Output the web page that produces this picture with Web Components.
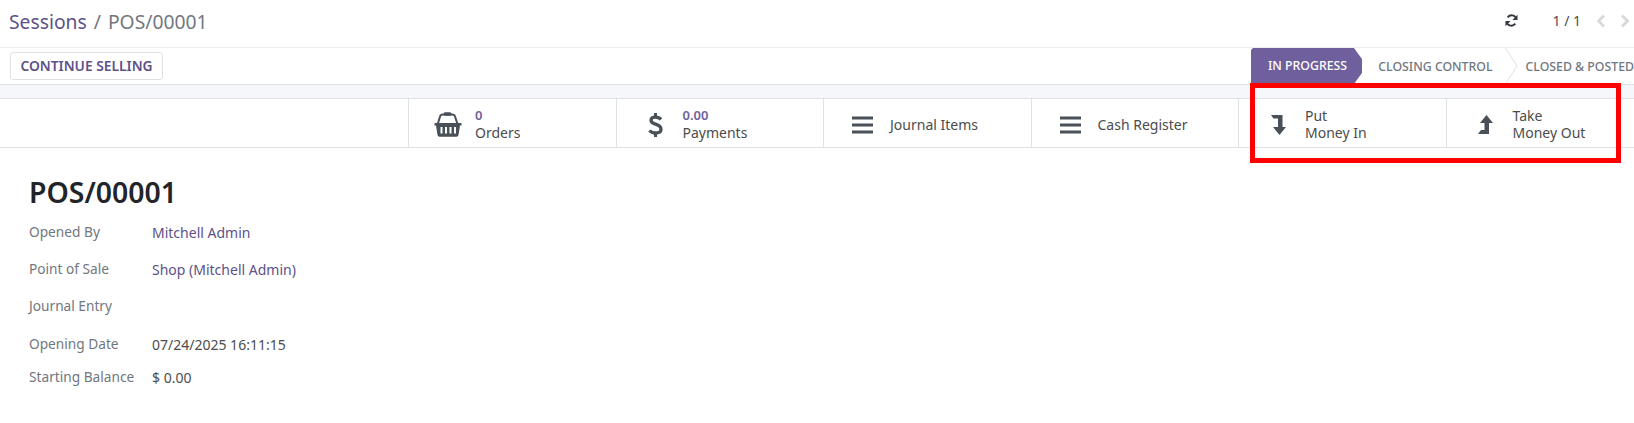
<!DOCTYPE html>
<html>
<head>
<meta charset="utf-8">
<style>
  html, body { margin: 0; padding: 0; background: #fff; overflow: hidden; }
  body { width: 1634px; height: 423px; font-family: "Noto Sans", sans-serif; font-size: 14px; color: #4c4c4c; position: relative; }
</style>
</head>
<body>
<control-panel></control-panel>
<action-bar>
  <status-steps></status-steps>
</action-bar>
<div style="height:13px;background:#f6f7fa;border-bottom:1px solid #dee2e6"></div>
<button-box>
  <stat-button icon="basket" value="0" label="Orders"></stat-button>
  <stat-button icon="dollar" value="0.00" label="Payments"></stat-button>
  <stat-button icon="bars" label="Journal Items"></stat-button>
  <stat-button icon="bars" label="Cash Register"></stat-button>
  <stat-button icon="down" line1="Put" label="Money In"></stat-button>
  <stat-button icon="up" line1="Take" label="Money Out"></stat-button>
</button-box>
<session-form>
  <field-row label="Opened By" link h="37">Mitchell Admin</field-row>
  <field-row label="Point of Sale" link h="37">Shop (Mitchell Admin)</field-row>
  <field-row label="Journal Entry" h="38"></field-row>
  <field-row label="Opening Date" h="33">07/24/2025 16:11:15</field-row>
  <field-row label="Starting Balance" h="31">$ 0.00</field-row>
</session-form>
<red-frame></red-frame>

<script>
const ICONS = {
  basket: '<svg width="28" height="25" viewBox="0 0 28 25"><path d="M3.800 12 L6 4.500 Q6.500 2.500 9 2.500 H18 Q20.500 2.500 21 4.500 L23.500 12" fill="none" stroke="#495057" stroke-width="2"/><rect x="9.500" y="0.300" width="8" height="3.500" rx="1.500" fill="#495057"/><path d="M0.500 11.500 Q0.500 11 1 11 H27 Q27.500 11 27.500 11.500 V13.500 H26 L24.500 23 Q24.200 24.800 22.500 24.800 H5.500 Q3.800 24.800 3.500 23 L2 13.500 H0.500 Z" fill="#495057"/><path d="M7.500 15 V21.500 M12 15 V21.500 M16.500 15 V21.500 M21 15 V21.500" stroke="#fff" stroke-width="2" fill="none"/></svg>',
  dollar: '<svg width="15" height="26" viewBox="0 0 15 26"><path d="M13 7.500 Q11 5.200 7.500 5.200 Q3 5.200 3 8.300 Q3 10.800 7.500 12.200 Q13 13.800 13 17.500 Q13 21 7.500 21 Q3.500 21 1.500 18.500" fill="none" stroke="#495057" stroke-width="3.300"/><path d="M6 1 H9 V5.500 H6 Z M6 20.500 H9 V25 H6 Z" fill="#495057"/></svg>',
  bars: '<svg width="21" height="18" viewBox="0 0 21 18" style="margin-left:-1px"><path d="M0 0.500 H21 V3.500 H0 Z M0 7.500 H21 V10.500 H0 Z M0 14.500 H21 V17.500 H0 Z" fill="#495057"/></svg>',
  down: '<svg width="15" height="20" viewBox="0 0 15 20" style="margin-top:1px"><path d="M0 0 H11.500 V12 H15 L8.500 20 L2 12 H7 V3.500 H2.500 Z" fill="#495057"/></svg>',
  up: '<svg width="15" height="19" viewBox="0 0 15 19" style="margin-top:-1px"><path d="M8.500 0 L15 8 H11 V19 H0 L3 15 H6.500 V8 H2 Z" fill="#495057"/></svg>'
};

class ControlPanel extends HTMLElement {
  constructor() {
    super();
    this.attachShadow({mode: 'open'}).innerHTML = `
      <style>
        :host { display: flex; height: 47px; border-bottom: 1px solid #eceef1; align-items: center; padding-left: 9px; }
        .crumb { font-size: 19.300px; color: #71777f; flex: 1; padding-bottom: 4px; }
        .crumb a { color: #5d5187; }
        .crumb span { margin: 0 2px; }
        .pager { display: flex; align-items: center; height: 100%; padding-bottom: 6px; box-sizing: border-box; }
        .num { font-size: 14px; color: #4c4c4c; margin: 0 15px 0 34px; }
        svg { display: block; }
      </style>
      <div class="crumb"><a>Sessions</a> <span>/</span> POS/00001</div>
      <div class="pager">
        <svg width="13" height="13" viewBox="0 0 13 13"><path d="M11.500 5 A5 5 0 0 0 2.700 3.300 M1.500 8 A5 5 0 0 0 10.300 9.700" fill="none" stroke="#343a40" stroke-width="1.900"/><path d="M12.500 0.800 V6 H7.500 Z M0.500 12.200 V7 H5.500 Z" fill="#343a40"/></svg>
        <div class="num">1 / 1</div>
        <svg width="10" height="14" viewBox="0 0 10 14"><path d="M8 1.500 L2.500 7 L8 12.500" fill="none" stroke="#d7d9dc" stroke-width="2.800"/></svg>
        <svg style="margin:0 4px 0 14px" width="10" height="14" viewBox="0 0 10 14"><path d="M2 1.500 L7.500 7 L2 12.500" fill="none" stroke="#d7d9dc" stroke-width="2.800"/></svg>
      </div>`;
  }
}
customElements.define('control-panel', ControlPanel);

class ActionBar extends HTMLElement {
  constructor() {
    super();
    this.attachShadow({mode: 'open'}).innerHTML = `
      <style>
        :host { display: flex; height: 36px; border-bottom: 1px solid #dee2e6; align-items: center; justify-content: space-between; padding-left: 10px; overflow: hidden; }
        button { font: 600 13.800px "Noto Sans", sans-serif; color: #5d5187; background: #fff; border: 1px solid #dee2e6; border-radius: 3px; height: 28px; width: 153px; padding: 0 0 2px; text-transform: uppercase; }
      </style>
      <button>Continue Selling</button>
      <slot></slot>`;
  }
}
customElements.define('action-bar', ActionBar);

class StatusSteps extends HTMLElement {
  constructor() {
    super();
    this.attachShadow({mode: 'open'}).innerHTML = `
      <style>
        :host { display: block; width: 383px; height: 36px; position: relative; overflow: hidden; flex: none; font-size: 12.300px; font-weight: 500; text-transform: uppercase; }
        .row { display: flex; height: 36px; align-items: center; white-space: nowrap; }
        .on { width: 117px; height: 36px; box-sizing: border-box; padding-left: 17px; line-height: 35px; color: #fff; background: #6f5f9d; clip-path: polygon(2px 0, 103px 0, 116px 18px, 103px 36px, 0 36px, 0 2px); }
        .next { color: #71777f; }
        svg { position: absolute; left: 254px; top: 0; }
      </style>
      <div class="row">
        <div class="on">In Progress</div>
        <div class="next" style="margin-left:16px">Closing Control</div>
        <div class="next" style="margin-left:33px">Closed &amp; Posted</div>
      </div>
      <svg width="13" height="36" viewBox="0 0 13 36"><path d="M0.500 0 L12 18 L0.500 36" fill="none" stroke="#dee2e6"/></svg>`;
  }
}
customElements.define('status-steps', StatusSteps);

class ButtonBox extends HTMLElement {
  constructor() {
    super();
    this.attachShadow({mode: 'open'}).innerHTML = `
      <style>
        :host { display: flex; height: 48px; border-bottom: 1px solid #dee2e6; padding-left: 408px; overflow: hidden; }
      </style>
      <slot></slot>`;
  }
}
customElements.define('button-box', ButtonBox);

class StatButton extends HTMLElement {
  connectedCallback() {
    if (this.shadowRoot) return;
    const value = this.getAttribute('value');
    const line1 = this.getAttribute('line1');
    const label = this.getAttribute('label');
    const top = value ? `<div class="val">${value}</div>` : line1 ? `<div>${line1}</div>` : '';
    this.attachShadow({mode: 'open'}).innerHTML = `
      <style>
        :host { display: flex; flex: none; width: 207.500px; box-sizing: border-box; border-left: 1px solid #dee2e6; align-items: center; padding: 3px 0 0 15px; font-size: 14px; color: #4c4c4c; }
        .ic { width: 48px; margin-right: 3px; display: flex; justify-content: center; flex: none; }
        svg { display: block; }
        .txt { line-height: 17px; margin-top: -1px; }
        .val { color: #6f5f9d; font-weight: 600; font-size: 13px; }
      </style>
      <div class="ic">${ICONS[this.getAttribute('icon')]}</div>
      <div class="txt">${top}<div>${label}</div></div>`;
  }
}
customElements.define('stat-button', StatButton);

class SessionForm extends HTMLElement {
  constructor() {
    super();
    this.attachShadow({mode: 'open'}).innerHTML = `
      <style>
        :host { display: block; padding: 25px 0 0 29px; }
        h1 { margin: 0 0 12px; font: 600 28.400px/38px "Noto Sans", sans-serif; color: #212529; }
      </style>
      <h1>POS/00001</h1>
      <slot></slot>`;
  }
}
customElements.define('session-form', SessionForm);

class FieldRow extends HTMLElement {
  connectedCallback() {
    if (this.shadowRoot) return;
    this.attachShadow({mode: 'open'}).innerHTML = `
      <style>
        :host { display: flex; height: ${this.getAttribute('h')}px; font-size: 14px; line-height: 18px; }
        .k { width: 123px; color: #71777f; font-size: 13.700px; }
        .v { color: ${this.hasAttribute('link') ? '#5d5187' : '#4c4c4c'}; padding-top: 1px; }
      </style>
      <div class="k">${this.getAttribute('label')}</div>
      <div class="v"><slot></slot></div>`;
  }
}
customElements.define('field-row', FieldRow);

class RedFrame extends HTMLElement {
  constructor() {
    super();
    this.attachShadow({mode: 'open'}).innerHTML = `
      <style>
        :host { position: absolute; left: 1250px; top: 83px; width: 371px; height: 80px; box-sizing: border-box; border: 5px solid #ff0000; }
      </style>`;
  }
}
customElements.define('red-frame', RedFrame);
</script>
</body>
</html>
